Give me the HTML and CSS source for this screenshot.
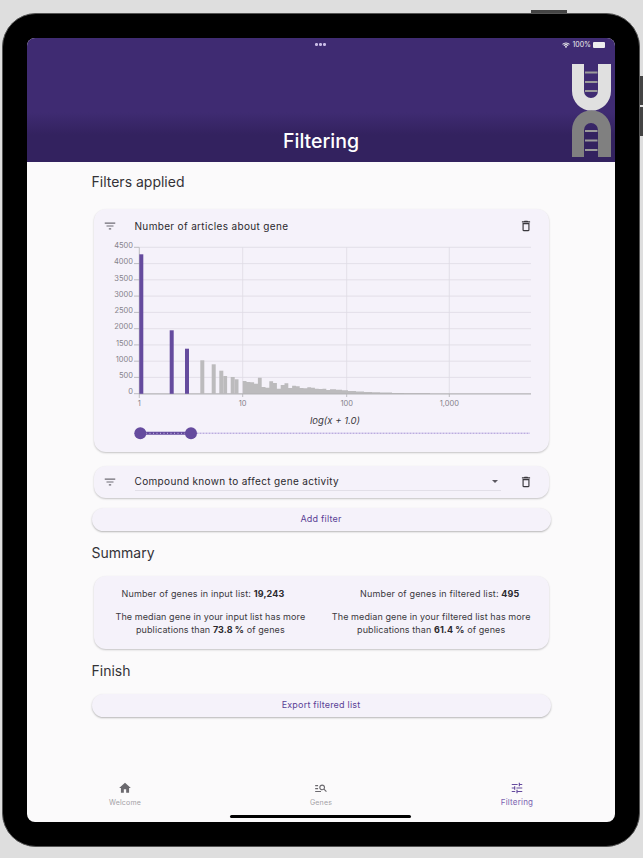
FILE: index.html

```html
<!DOCTYPE html>
<html lang="en">
<head>
    <meta charset="UTF-8">
    <meta name="viewport" content="width=device-width, initial-scale=1.0">
    <title>Filtering</title>
    <link rel="stylesheet" href="styles.css">
</head>
<body>
    <div class="side-button top"></div>
    <div class="side-button vol-up"></div>
    <div class="side-button vol-down"></div>

    <div class="device">
        <div class="screen">
            <!-- iPad status bar -->
            <div class="multitask-dots"><i></i><i></i><i></i></div>
            <div class="status-bar">
                <svg class="wifi" viewBox="0 0 16 12"><path d="M8 12 5.6 9.4a3.4 3.4 0 0 1 4.8 0zM4.4 8.2 3 6.8a7 7 0 0 1 10 0l-1.4 1.4a5 5 0 0 0-7.2 0zM1.8 5.6.4 4.2a10.7 10.7 0 0 1 15.2 0l-1.4 1.4a8.7 8.7 0 0 0-12.4 0z"/></svg>
                <span>100%</span>
                <div class="battery"></div>
            </div>

            <header class="app-bar">
                <h1>Filtering</h1>
                <svg class="logo" viewBox="0 0 39 93">
                    <path fill="#e0e0e0" d="M0 0H12V27A7 7 0 0 0 26 27V0H39V27A19.5 19.7 0 0 1 0 27Z"/>
                    <path fill="#808080" d="M0 93H12V66A7 7 0 0 1 26 66V93H39V66A19.5 19.7 0 0 0 0 66Z"/>
                    <g fill="#9a9a9a">
                        <rect x="13" y="7.5" width="12.500" height="2"/>
                        <rect x="13" y="17" width="12.500" height="2"/>
                        <rect x="13" y="26" width="12.500" height="2"/>
                        <rect x="13" y="66" width="12.500" height="2"/>
                        <rect x="13" y="75.500" width="12.500" height="2"/>
                        <rect x="13" y="85" width="12.500" height="2"/>
                    </g>
                </svg>
            </header>

            <main class="content">
                <h2 class="section-title first">Filters applied</h2>

                <section class="card chart-card">
                    <div class="filter-head">
                        <svg class="icon filter-icon" viewBox="0 0 24 24"><path d="M10 18h4v-2h-4v2zM3 6v2h18V6H3zm3 7h12v-2H6v2z"/></svg>
                        <span class="filter-name">Number of articles about gene</span>
                        <svg class="icon trash-icon" viewBox="0 0 24 24"><path d="M6 19c0 1.100.9 2 2 2h8c1.100 0 2-.9 2-2V7H6v12zM8 9h8v10H8V9zm7.500-5l-1-1h-5l-1 1H5v2h14V4z"/></svg>
                    </div>

                    <svg class="chart" viewBox="94 242 456 203">
                        <g class="grid">
                            <path d="M139 247.300H531M139 263.600H531M139 279.800H531M139 296.100H531M139 312.400H531M139 328.700H531M139 344.900H531M139 361.200H531M139 377.400H531"/>
                            <path d="M242.700 247.300V394M346.700 247.300V394M449.300 247.300V394"/>
                        </g>
                        <g class="ticks">
                            <path d="M134 247.300H139M134 263.600H139M134 279.800H139M134 296.100H139M134 312.400H139M134 328.700H139M134 344.900H139M134 361.200H139M134 377.400H139M134 393.700H139"/>
                            <path d="M139.300 247.300V398M242.700 394V397M346.700 394V397M449.300 394V397"/>
                        </g>
                        <g class="y-labels">
                            <text x="133" y="248">4500</text>
                            <text x="133" y="264.300">4000</text>
                            <text x="133" y="280.500">3500</text>
                            <text x="133" y="296.800">3000</text>
                            <text x="133" y="313.100">2500</text>
                            <text x="133" y="329.400">2000</text>
                            <text x="133" y="345.600">1500</text>
                            <text x="133" y="361.900">1000</text>
                            <text x="133" y="378.100">500</text>
                            <text x="133" y="394.400">0</text>
                        </g>
                        <g class="x-labels">
                            <text x="139.300" y="406">1</text>
                            <text x="242.700" y="406">10</text>
                            <text x="346.700" y="406">100</text>
                            <text x="449.300" y="406">1,000</text>
                        </g>

                        <!-- bars outside the selected range -->
                        <g class="bars-out">
                            <rect x="200.300" y="360.300" width="4" height="33.400"/>
                            <rect x="211.700" y="364.300" width="4" height="29.400"/>
                            <rect x="219.300" y="370.700" width="4" height="23"/>
                            <rect x="223.300" y="376" width="3.800" height="17.700"/>
                            <rect x="230.700" y="377" width="4" height="16.700"/>
                            <rect x="234.700" y="379.300" width="3.800" height="14.400"/>
                            <path d="M242.700 394V381H246.500V382H250.300V382.300H254.100V383.700H257.900V377.700H261.700V387H265.500V387.700H269.300V381.300H273.100V383H276.900V388.700H280.700V385H284.500V383.300H288.300V388H292.100V385.700H295.900V386.300H299.700V388H303.500V388.300H307.300V387.300H311.100V387.700H314.900V388.700H318.700V389H322.500V388.700H326.300V390H330V389.300H336V389.800H342V390.300H348V390.900H356V391.400H364V391.900H372V392.300H380V392.600H392V392.900H404V393.200H430V394Z"/>
                        </g>
                        <path class="axis" d="M139 393.800H531"/>
                        <g class="bars-in">
                            <rect x="139.300" y="254.300" width="4" height="139.500"/>
                            <rect x="169.700" y="330.300" width="4" height="63.500"/>
                            <rect x="185" y="348.700" width="4" height="45.100"/>
                        </g>

                        <text class="axis-name" x="335" y="424">log(x + 1.0)</text>

                        <!-- range slider -->
                        <path class="track-rest" d="M191 433.300H530"/>
                        <path class="track-dots" d="M191 433.300H530"/>
                        <path class="track-active" d="M140.300 433.300H191"/>
                        <path class="track-active-dots" d="M146 433.300H186"/>
                        <circle class="thumb" cx="140.300" cy="433.300" r="6"/>
                        <circle class="thumb" cx="191" cy="433.300" r="6"/>
                    </svg>
                </section>

                <section class="card filter-row">
                    <svg class="icon filter-icon" viewBox="0 0 24 24"><path d="M10 18h4v-2h-4v2zM3 6v2h18V6H3zm3 7h12v-2H6v2z"/></svg>
                    <div class="select">
                        <span class="filter-name">Compound known to affect gene activity</span>
                        <div class="select-arrow"></div>
                    </div>
                    <svg class="icon trash-icon" viewBox="0 0 24 24"><path d="M6 19c0 1.100.9 2 2 2h8c1.100 0 2-.9 2-2V7H6v12zM8 9h8v10H8V9zm7.500-5l-1-1h-5l-1 1H5v2h14V4z"/></svg>
                </section>

                <button class="pill-button add-filter">Add filter</button>

                <h2 class="section-title">Summary</h2>

                <section class="card summary">
                    <div class="summary-row counts">
                        <p>Number of genes in input list: <b>19,243</b></p>
                        <p>Number of genes in filtered list: <b>495</b></p>
                    </div>
                    <div class="summary-row medians">
                        <p>The median gene in your input list has more<br>publications than <b>73.8 %</b> of genes</p>
                        <p>The median gene in your filtered list has more<br>publications than <b>61.4 %</b> of genes</p>
                    </div>
                </section>

                <h2 class="section-title">Finish</h2>

                <button class="pill-button">Export filtered list</button>
            </main>

            <nav class="bottom-nav">
                <div class="nav-item">
                    <svg viewBox="0 0 24 24"><path d="M10 20v-6h4v6h5v-8h3L12 3 2 12h3v8z"/></svg>
                    <span>Welcome</span>
                </div>
                <div class="nav-item">
                    <svg viewBox="0 0 24 24"><path d="M7 9H2V7h5v2zm0 3H2v2h5v-2zm13.590 7l-3.830-3.830c-.8.520-1.740.830-2.760.830-2.760 0-5-2.240-5-5s2.240-5 5-5 5 2.240 5 5c0 1.020-.310 1.960-.830 2.750L22 17.590 20.590 19zM17 11c0-1.650-1.350-3-3-3s-3 1.350-3 3 1.350 3 3 3 3-1.350 3-3zM2 19h10v-2H2v2z"/></svg>
                    <span>Genes</span>
                </div>
                <div class="nav-item active">
                    <svg viewBox="0 0 24 24"><path d="M3 17v2h6v-2H3zM3 5v2h10V5H3zm10 16v-2h8v-2h-8v-2h-2v6h2zM7 9v2H3v2h4v2h2V9H7zm14 4v-2H11v2h10zm-6-4h2V7h4V5h-4V3h-2v6z"/></svg>
                    <span>Filtering</span>
                </div>
            </nav>
            <div class="home-indicator"></div>
        </div>
    </div>
</body>
</html>
```

FILE: styles.css

```css
* {
    box-sizing: border-box;
}
html, body {
    margin: 0;
    height: 858px;
    overflow: hidden;
}
body {
    background: #dedede;
    font-family: Inter, 'Noto Sans', sans-serif;
    color: #1d1b20;
    padding: 13px 3px 11px 2px;
    position: relative;
}

/* device frame */
.device {
    height: 100%;
    background: #000;
    border: 1px solid #555;
    border-radius: 34px;
    padding: 24px;
}
.side-button {
    position: absolute;
    background: #444;
}
.side-button.top {
    top: 10px;
    left: 531px;
    width: 36px;
    height: 3px;
}
.side-button.vol-up {
    top: 76px;
    right: 0;
    width: 3px;
    height: 29px;
}
.side-button.vol-down {
    top: 107px;
    right: 0;
    width: 3px;
    height: 29px;
}
.screen {
    height: 100%;
    background: #fbfafb;
    border-radius: 8px;
    overflow: hidden;
    display: flex;
    flex-direction: column;
    position: relative;
}

/* status bar */
.multitask-dots {
    position: absolute;
    z-index: 1;
    top: 5px;
    left: 288px;
    display: flex;
    gap: 1.500px;
}
.multitask-dots i {
    width: 2.500px;
    height: 2.500px;
    border-radius: 50%;
    background: #c9bce6;
}
.status-bar {
    position: absolute;
    z-index: 1;
    top: 2px;
    right: 10px;
    display: flex;
    align-items: center;
    gap: 2px;
    color: #eee;
    font-size: 7px;
    line-height: 9px;
}
.wifi {
    width: 8px;
    height: 6px;
    fill: #eee;
}
.battery {
    width: 12px;
    height: 6px;
    background: #eee;
    border-radius: 1px;
}

/* header */
.app-bar {
    height: 124px;
    flex: none;
    background: linear-gradient(#3f2b72 0, #3f2b72 60%, #33225f 78%, #33225f 100%);
    display: flex;
    align-items: flex-end;
    justify-content: center;
    position: relative;
}
.app-bar h1 {
    margin: 0 0 9px 0;
    color: #fff;
    font-size: 19.500px;
    line-height: 24px;
    font-weight: 500;
}
.logo {
    position: absolute;
    top: 26px;
    right: 4px;
    width: 39px;
    height: 93px;
}

/* main content */
.content {
    flex: 1;
    padding: 0 64.500px;
    display: flex;
    flex-direction: column;
}
.section-title {
    margin: 12.500px 0;
    font-size: 14px;
    line-height: 20px;
    font-weight: 400;
    color: #343237;
}
.section-title.first {
    margin: 10px 0 17px 0;
}
.card {
    margin: 0 2px;
    background: #f5f2fa;
    border-radius: 12px;
    box-shadow: 0 1px 2px rgba(0, 0, 0, 0.22);
}
.chart-card {
    height: 243px;
    margin-bottom: 14px;
}
.filter-head {
    height: 33px;
    padding: 0 16px 0 9px;
    display: flex;
    align-items: center;
}
.icon {
    flex: none;
    width: 14px;
    height: 14px;
}
.filter-icon {
    fill: #6f6c74;
}
.trash-icon {
    fill: #3b393e;
}
.filter-name {
    font-size: 10px;
    letter-spacing: 0.340px;
    font-weight: 400;
    color: #2b292e;
}
.filter-head .filter-name {
    flex: 1;
    margin-left: 18px;
}
.chart {
    display: block;
    width: 456px;
    height: 203px;
}
.grid path {
    stroke: #dedbe4;
    stroke-width: 0.800;
    fill: none;
}
.ticks path {
    stroke: #aeaeb2;
    stroke-width: 0.800;
    fill: none;
}
.y-labels text {
    font-size: 7.500px;
    fill: #85828a;
    text-anchor: end;
}
.x-labels text {
    font-size: 7.500px;
    fill: #85828a;
    text-anchor: middle;
}
.bars-out {
    fill: #bcbbbd;
}
.bars-in {
    fill: #654b9e;
}
.axis {
    stroke: #b4b3b6;
    stroke-width: 1.200;
}
.axis-name {
    font-size: 9.500px;
    font-style: italic;
    text-anchor: middle;
    fill: #3b393e;
}
.track-rest {
    stroke: #d9d0ee;
    stroke-width: 1.500;
}
.track-dots {
    stroke: #b5a4da;
    stroke-width: 1;
    stroke-dasharray: 1 2;
}
.track-active {
    stroke: #654b9e;
    stroke-width: 3;
}
.track-active-dots {
    stroke: #c9bce6;
    stroke-width: 1;
    stroke-dasharray: 1 2.500;
}
.thumb {
    fill: #654b9e;
}

/* second filter */
.filter-row {
    height: 32px;
    margin-bottom: 9.500px;
    padding: 0 16px 0 9px;
    display: flex;
    align-items: center;
}
.select {
    flex: 1;
    height: 18px;
    margin: 0 18px;
    border-bottom: 1px solid #e2dfe8;
    display: flex;
    align-items: center;
    justify-content: space-between;
    padding: 0 3px 1px 0;
}
.select-arrow {
    width: 0;
    height: 0;
    border-left: 3px solid transparent;
    border-right: 3px solid transparent;
    border-top: 3px solid #5b5960;
}

.pill-button {
    height: 23px;
    flex: none;
    border: none;
    border-radius: 12px;
    background: #f5f2fa;
    box-shadow: 0 1px 2px rgba(0, 0, 0, 0.28);
    color: #5a3f96;
    font-family: inherit;
    font-size: 9px;
    letter-spacing: 0.200px;
    font-weight: 400;
    padding: 0 0 1px 0;
}

/* summary */
.summary {
    height: 73px;
    padding-top: 12px;
    font-size: 9px;
    line-height: 12.700px;
    color: #3b393e;
    text-align: center;
}
.summary p {
    margin: 0;
}
.summary b {
    font-weight: 700;
    color: #2b292e;
}
.summary-row {
    display: flex;
    justify-content: space-between;
}
.counts {
    letter-spacing: 0.150px;
    padding: 0 29px 0 28px;
    margin-bottom: 11px;
}
.medians {
    letter-spacing: 0.090px;
    padding: 0 18px 0 22px;
}

/* bottom navigation */
.bottom-nav {
    flex: none;
    height: 62px;
    display: flex;
    padding-top: 21px;
}
.nav-item {
    flex: 1;
    display: flex;
    flex-direction: column;
    align-items: center;
    color: #a3a1a6;
    fill: #6b696e;
    font-size: 7px;
    letter-spacing: 0.200px;
}
.nav-item svg {
    width: 14px;
    height: 14px;
    margin-bottom: 3px;
}
.nav-item.active {
    color: #7a62b0;
    fill: #654b9e;
    font-size: 8px;
}
.nav-item.active svg {
    margin-bottom: 2px;
}
.home-indicator {
    position: absolute;
    left: 203px;
    bottom: 4px;
    width: 181px;
    height: 3px;
    border-radius: 2px;
    background: #000;
}
```
